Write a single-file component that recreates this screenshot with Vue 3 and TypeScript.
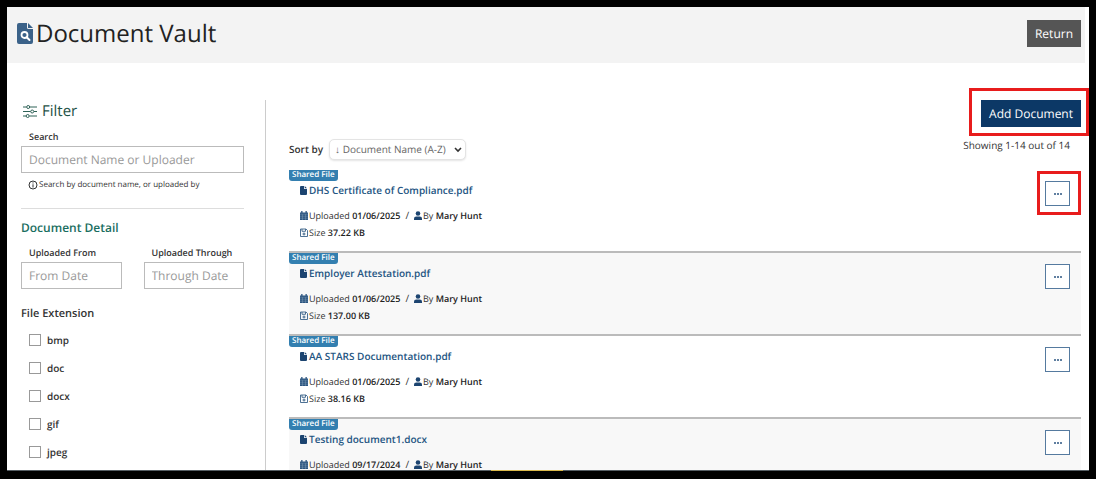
<script setup lang="ts">
import { ref } from 'vue'

interface VaultDocument {
  name: string
  uploaded: string
  by: string
  size: string
  marked?: boolean
}

const documents: VaultDocument[] = [
  { name: 'DHS Certificate of Compliance.pdf', uploaded: '01/06/2025', by: 'Mary Hunt', size: '37.22 KB', marked: true },
  { name: 'Employer Attestation.pdf', uploaded: '01/06/2025', by: 'Mary Hunt', size: '137.00 KB' },
  { name: 'AA STARS Documentation.pdf', uploaded: '01/06/2025', by: 'Mary Hunt', size: '38.16 KB' },
  { name: 'Testing document1.docx', uploaded: '09/17/2024', by: 'Mary Hunt', size: '' },
]

const extensions: string[] = ['bmp', 'doc', 'docx', 'gif', 'jpeg']
const selected = ref<string[]>([])
const search = ref('')
const from = ref('')
const through = ref('')
const sort = ref('az')
</script>

<template>
  <div class="frame">
    <header class="top">
      <h1>
        <svg class="title-icon" viewBox="0 0 16 21" aria-hidden="true">
          <path fill="#3b6289" d="M2 0h8v4.500q0 1.500 1.500 1.500H16v13q0 2-2 2H2q-2 0-2-2V2Q0 0 2 0Z" />
          <path fill="#3b6289" d="M11 0l5 5h-5Z" />
          <circle cx="7.500" cy="12" r="3" fill="none" stroke="#fff" stroke-width="1.800" />
          <path d="M9.700 14.200l2.800 2.800" stroke="#fff" stroke-width="2" stroke-linecap="round" />
        </svg>
        Document Vault
      </h1>
      <button class="return" type="button">Return</button>
    </header>

    <div class="body">
      <aside class="filters">
        <h2>
          <svg class="filter-icon" viewBox="0 0 14 13" aria-hidden="true" fill="none" stroke="#2f6257">
            <path d="M0 2h3.500M7 2h7M0 6.500h7.500M11 6.500h3M0 11h3M6.500 11H14" />
            <circle cx="5.200" cy="2" r="1.500" />
            <circle cx="9.200" cy="6.500" r="1.500" />
            <circle cx="4.700" cy="11" r="1.500" />
          </svg>
          Filter
        </h2>
        <label class="field-label" for="search">Search</label>
        <input id="search" v-model="search" class="field" type="text" placeholder="Document Name or Uploader" />
        <p class="hint">
          <svg class="info-icon" viewBox="0 0 10 10" aria-hidden="true" fill="none" stroke="#333">
            <circle cx="5" cy="5" r="4" />
            <path d="M5 4.300V7.500M5 2.400v1.100" />
          </svg>
          <span>Search by document name, or uploaded by</span>
        </p>
        <h3>Document Detail</h3>
        <div class="dates">
          <div>
            <label class="field-label" for="from">Uploaded From</label>
            <input id="from" v-model="from" class="field" type="text" placeholder="From Date" />
          </div>
          <div>
            <label class="field-label" for="through">Uploaded Through</label>
            <input id="through" v-model="through" class="field" type="text" placeholder="Through Date" />
          </div>
        </div>
        <fieldset>
          <legend>File Extension</legend>
          <label v-for="ext in extensions" :key="ext" class="check">
            <input v-model="selected" type="checkbox" :value="ext" />
            {{ ext }}
          </label>
        </fieldset>
      </aside>

      <main class="content">
        <div class="tools">
          <div class="sort">
            <label for="sort">Sort by</label>
            <span class="select-wrap">
              <select id="sort" v-model="sort">
                <option value="az">↓ Document Name (A-Z)</option>
                <option value="za">↑ Document Name (Z-A)</option>
              </select>
              <svg class="chevron" viewBox="0 0 8 6" aria-hidden="true" fill="none" stroke="#333" stroke-width="1.600">
                <path d="M1 1l3 3 3-3" />
              </svg>
            </span>
          </div>
          <div class="add-area">
            <div class="add-mark">
              <button class="add" type="button">Add Document</button>
            </div>
            <p class="count">Showing 1-14 out of 14</p>
          </div>
        </div>

        <ul class="list">
          <li v-for="doc in documents" :key="doc.name" class="row">
            <div class="info">
              <span class="badge">Shared File</span>
              <a class="name" href="#">
                <svg class="file-icon" viewBox="0 0 7 9" aria-hidden="true">
                  <path fill="#1c4470" d="M1 0h3v2.500q0 .5.5.5H7v5q0 1-1 1H1Q0 9 0 8V1q0-1 1-1ZM4.700 0L7 2.300H4.700Z" />
                </svg>
                {{ doc.name }}
              </a>
              <div class="meta">
                <svg class="meta-icon" viewBox="0 0 8 9" aria-hidden="true">
                  <path fill="#2b5580" d="M0 1.500h1.200V0h1.300v1.500h3V0h1.300v1.500H8V9H0Z" />
                  <path d="M0 3.200h8M0 5.200h8M0 7.200h8M2.500 3.200V9M5.500 3.200V9" stroke="#8fa8c0" stroke-width=".4" />
                </svg>
                <span>Uploaded <b>{{ doc.uploaded }}</b></span>
                <span class="slash">/</span>
                <svg class="meta-icon" viewBox="0 0 8 9" aria-hidden="true" fill="#1c4470">
                  <circle cx="4" cy="2.500" r="2.300" />
                  <path d="M0 9V7.500Q0 5.500 2.300 5.500h3.400Q8 5.500 8 7.500V9Z" />
                </svg>
                <span>By <b>{{ doc.by }}</b></span>
              </div>
              <div v-if="doc.size" class="meta">
                <svg class="meta-icon" viewBox="0 0 8 9" aria-hidden="true" fill="none" stroke="#3b6289">
                  <path d="M.5 1h5.500l1.500 1.500V8.500h-7ZM2 1v2.300h3.500V1" stroke-width=".9" />
                  <circle cx="4" cy="6" r="1" />
                </svg>
                <span>Size <b>{{ doc.size }}</b></span>
              </div>
            </div>
            <div class="action" :class="{ marked: doc.marked }">
              <button class="more" type="button" :aria-label="'Actions for ' + doc.name">
                <svg viewBox="0 0 8 2" aria-hidden="true" fill="#2b5580">
                  <circle cx="1" cy="1" r="1" />
                  <circle cx="4" cy="1" r="1" />
                  <circle cx="7" cy="1" r="1" />
                </svg>
              </button>
            </div>
          </li>
        </ul>
      </main>
    </div>
    <div class="progress"></div>
  </div>
</template>

<style>
html,
body {
  background: #fff;
}
</style>

<style scoped>
* {
  box-sizing: border-box;
}

h1, h2, h3, p, ul, fieldset {
  margin: 0;
  padding: 0;
}

button, input, select {
  font-family: inherit;
  text-rendering: inherit;
}

.frame {
  position: relative;
  height: 100vh;
  overflow: hidden;
  border: 7px solid #000;
  border-bottom-width: 8px;
  background: #fff;
  color: #333;
  font-family: "Open Sans", "Noto Sans", sans-serif;
  font-size: 10px;
  text-rendering: geometricPrecision;
}

.frame::after {
  content: "";
  position: absolute;
  inset: auto 0 0;
  height: 1px;
  background: #555d63;
}

.top {
  display: flex;
  align-items: center;
  justify-content: space-between;
  height: 56px;
  margin-right: 4px;
  padding: 0 4px 3px 10px;
  background: #f3f3f3;
}

h1 {
  display: flex;
  align-items: center;
  gap: 3px;
  color: #222;
  font-size: 24px;
  font-weight: 400;
  line-height: 32px;
}

.title-icon {
  width: 16px;
  height: 21px;
}

.return, .add {
  height: 27px;
  padding: 0 8px;
  border: 0;
  color: #fff;
  font-size: 12px;
}

.return {
  background: #555;
}

.body {
  display: flex;
  padding: 37px 8px 0 14px;
}

.filters {
  flex: 0 0 245px;
  height: 480px;
  padding-right: 21px;
  border-right: 1px solid #ccc;
}

h2 {
  display: flex;
  align-items: center;
  gap: 5px;
  margin-bottom: 6px;
  padding-left: 2px;
  color: #1f5347;
  font-size: 15px;
  font-weight: 400;
  line-height: 22px;
}

.filter-icon {
  width: 14px;
  height: 13px;
}

.field-label {
  display: block;
  padding-left: 8px;
  font-size: 9px;
  font-weight: 600;
  line-height: 18px;
}

.field {
  display: block;
  width: 100%;
  height: 27px;
  padding: 0 7px;
  border: 1px solid #bbb;
  border-radius: 0;
  background: #fff;
  font-size: 12px;
}

.field::placeholder {
  color: #999;
}

.hint {
  display: flex;
  align-items: center;
  gap: 1px;
  height: 36px;
  padding: 0 0 12px 7px;
  border-bottom: 1px solid #ddd;
  font-size: 8px;
}

.info-icon {
  width: 10px;
  height: 10px;
}

h3 {
  margin: 10px 0 7px;
  color: #1a6e5f;
  font-size: 12px;
  font-weight: 600;
  line-height: 18px;
}

.dates {
  display: grid;
  grid-template-columns: 1fr 1fr;
  gap: 22px;
}

fieldset {
  margin-top: 16px;
  border: 0;
}

legend {
  padding: 0;
  margin-bottom: 4px;
  font-size: 11px;
  font-weight: 600;
  line-height: 17px;
}

.check {
  display: flex;
  align-items: center;
  gap: 6px;
  height: 28px;
  padding-left: 8px;
  font-size: 10px;
  font-weight: 600;
}

.check input {
  appearance: none;
  width: 12px;
  height: 12px;
  margin: 0;
  border: 1px solid #999;
  background: #fff;
}

.content {
  flex: 1;
  min-width: 0;
  padding-left: 23px;
}

.tools {
  display: flex;
  justify-content: space-between;
  height: 68px;
}

.sort {
  display: flex;
  align-items: center;
  gap: 6px;
  height: 22px;
  margin-top: 38px;
}

.sort label {
  font-weight: 600;
}

.select-wrap {
  position: relative;
}

.sort select {
  display: block;
  appearance: none;
  height: 21px;
  padding: 0 19px 0 5px;
  border: 1px solid #e4e4e4;
  border-radius: 5px;
  background: #fff;
  box-shadow: 0 1px 2px #e4e4e4;
  color: #666;
  font-size: 10px;
}

.chevron {
  position: absolute;
  top: 8px;
  right: 4px;
  width: 8px;
  height: 6px;
  pointer-events: none;
}

.add-area {
  display: flex;
  flex-direction: column;
  align-items: flex-end;
}

.add-mark {
  margin: -12px -8px 0 0;
  padding: 9px 5px 6px 9px;
  border: 3px solid #e81c1c;
}

.add {
  display: block;
  background: #0c3866;
}

.count {
  padding-right: 11px;
  font-size: 10px;
  line-height: 18px;
}

.list {
  list-style: none;
}

.row {
  display: flex;
  justify-content: space-between;
  height: 83px;
  border-top: 2px solid #bbb;
}

.row:first-child {
  border-top-color: transparent;
}

.row:nth-child(even) {
  background: #f8f8f8;
}

.info {
  display: flex;
  flex-direction: column;
  align-items: flex-start;
}

.badge {
  height: 11px;
  margin-bottom: 1px;
  padding: 0 3px;
  border-radius: 0 0 3px 3px;
  background: #337fb0;
  color: #fff;
  font-size: 8px;
  font-weight: 600;
  line-height: 10px;
}

.name {
  display: flex;
  align-items: center;
  gap: 2px;
  margin-bottom: 9px;
  padding-left: 11px;
  color: #245582;
  font-size: 10px;
  font-weight: 600;
  line-height: 16px;
  text-decoration: none;
}

.file-icon {
  width: 7px;
  height: 9px;
}

.meta {
  display: flex;
  align-items: center;
  gap: 1px;
  padding-left: 11px;
  font-size: 9px;
  line-height: 17px;
}

.meta b {
  color: #222;
  font-weight: 600;
}

.slash {
  padding: 0 4px;
  font-size: 10px;
}

.meta-icon {
  width: 8px;
  height: 9px;
}

.action {
  align-self: flex-start;
  margin-top: 1px;
  padding: 7px 8px 6px 5px;
  border: 3px solid transparent;
}

.action.marked {
  border-color: #e81c1c;
}

.more {
  display: grid;
  place-items: center;
  width: 25px;
  height: 25px;
  padding: 0;
  border: 1px solid #557a9f;
  background: #fff;
}

.more svg {
  width: 8px;
  height: 2px;
}

.progress {
  position: absolute;
  z-index: 1;
  bottom: 0;
  left: 44.700%;
  width: 72px;
  height: 1px;
  background: #d9b84c;
}
</style>
